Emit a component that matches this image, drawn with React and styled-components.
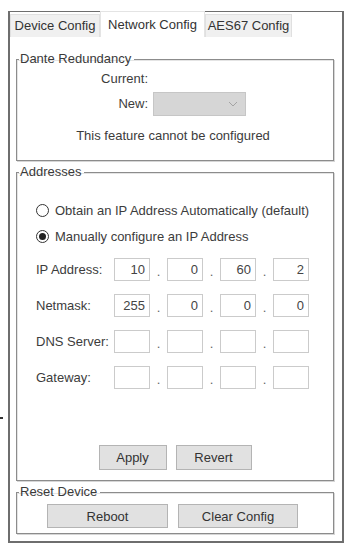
import React, { useState } from "react";
import styled, { createGlobalStyle } from "styled-components";

const GlobalStyle = createGlobalStyle`
  html, body {
    margin: 0;
    padding: 0;
    background: #fff;
  }
  body {
    font-family: "Liberation Sans", Arial, sans-serif;
    font-size: 13px;
    color: #3c3c3c;
  }
`;

const Page = styled.div`
  position: relative;
  width: 360px;
  height: 549px;
  padding: 11px 0 0 8px;
  box-sizing: border-box;
`;

// stray mark at the left edge of the screenshot
const EdgeMark = styled.span`
  position: absolute;
  left: 0;
  top: 417px;
  width: 3px;
  height: 2px;
  background: #333;
`;

const Window = styled.div`
  width: 336px;
  height: 532px;
  box-sizing: border-box;
  border: 2px solid #6e6e6e;
  border-top-width: 1px;
  display: flex;
  flex-direction: column;
  background: #fff;
`;

const TabBar = styled.div`
  display: flex;
  align-items: flex-end;
  height: 25px;
  flex-shrink: 0;
`;

const Tab = styled.button`
  font: inherit;
  color: #333;
  height: ${(p) => (p.$active ? "26px" : "23px")};
  width: ${(p) => p.$width}px;
  padding: 0;
  margin: 0;
  background: ${(p) => (p.$active ? "#fff" : "#f0f0f0")};
  border: 1px solid ${(p) => (p.$active ? "#e4e4e4" : "#e0e0e0")};
  border-bottom: none;
  cursor: pointer;
  line-height: 20px;
`;

const Panel = styled.div`
  flex: 1;
  padding: 14px 8px 0 6px;
  display: flex;
  flex-direction: column;
  gap: 3px;
`;

const Group = styled.fieldset`
  margin: 0;
  padding: ${(p) => p.$pad || "0"};
  border: 1px solid #8c8c8c;
  box-shadow: 1px 1px 0 #d6d6d6, inset 1px 1px 0 #e4e4e4;
  min-inline-size: 0;
`;

const Legend = styled.legend`
  padding: 0 3px 0 1px;
  margin-left: 2px;
  line-height: 16px;
  color: #3a3a3a;
`;

const FormRow = styled.div`
  display: grid;
  grid-template-columns: 131px auto;
  column-gap: 5px;
  align-items: center;
  min-height: ${(p) => p.$h || 16}px;
  margin-top: ${(p) => p.$mt || 0}px;
`;

const RowLabel = styled.span`
  text-align: right;
  line-height: 16px;
`;

const Dropdown = styled.div`
  width: 93px;
  height: 24px;
  box-sizing: border-box;
  background: #d6d6d6;
  border: 1px solid #c6c6c6;
  display: flex;
  align-items: center;
  justify-content: flex-end;
  padding-right: 7px;
`;

const Note = styled.div`
  text-align: center;
  line-height: 16px;
  margin-top: 12px;
  padding-right: 4px;
`;

const AddressBody = styled.div`
  padding-left: 19px;
`;

const RadioRow = styled.label`
  display: flex;
  align-items: center;
  gap: 6px;
  height: 16px;
  margin-top: ${(p) => p.$mt || 0}px;
  cursor: pointer;
`;

const RadioCircle = styled.span`
  width: 13px;
  height: 13px;
  box-sizing: border-box;
  border-radius: 50%;
  border: 1px solid #333;
  background: #fff;
  display: flex;
  align-items: center;
  justify-content: center;

  &::after {
    content: "";
    width: 7px;
    height: 7px;
    border-radius: 50%;
    background: ${(p) => (p.$checked ? "#222" : "transparent")};
  }
`;

const IpRow = styled.div`
  display: flex;
  align-items: center;
  height: 23px;
  margin-top: ${(p) => p.$mt || 0}px;
`;

const IpLabel = styled.span`
  width: 78px;
  flex-shrink: 0;
`;

const Octet = styled.div`
  width: 36px;
  height: 23px;
  box-sizing: border-box;
  border: 1px solid #cbcbcb;
  background: #fff;
  text-align: right;
  padding-right: 4px;
  line-height: 21px;
  color: #444;
`;

const Dot = styled.span`
  width: 17px;
  text-align: center;
  color: #666;
  padding-top: 4px;
`;

const ButtonRow = styled.div`
  display: flex;
  justify-content: center;
  gap: ${(p) => p.$gap || 9}px;
  margin-top: ${(p) => p.$mt || 0}px;
  padding-right: ${(p) => p.$pr || 0}px;
`;

const Button = styled.button`
  font: inherit;
  color: #333;
  width: ${(p) => p.$width}px;
  height: ${(p) => p.$height || 25}px;
  padding: 0;
  background: #e1e1e1;
  border: 1px solid #b4b4b4;
  cursor: pointer;

  &:hover {
    background: #e5f1fb;
    border-color: #0078d7;
  }
`;

const Chevron = () => (
  <svg width="10" height="6" viewBox="0 0 10 6">
    <polyline points="1,1 5,5 9,1" fill="none" stroke="#a4a4a4" strokeWidth="1" />
  </svg>
);

const ADDRESS_ROWS = [
  { label: "IP Address:", values: ["10", "0", "60", "2"] },
  { label: "Netmask:", values: ["255", "0", "0", "0"] },
  { label: "DNS Server:", values: ["", "", "", ""] },
  { label: "Gateway:", values: ["", "", "", ""] },
];

const TABS = [
  { name: "Device Config", width: 90 },
  { name: "Network Config", width: 105 },
  { name: "AES67 Config", width: 87 },
];

const App = () => {
  const [tab, setTab] = useState("Network Config");
  const [manual, setManual] = useState(true);

  return (
    <Page>
      <GlobalStyle />
      <EdgeMark />
      <Window>
        <TabBar>
          {TABS.map((t) => (
            <Tab
              key={t.name}
              $width={t.width}
              $active={tab === t.name}
              onClick={() => setTab(t.name)}
            >
              {t.name}
            </Tab>
          ))}
        </TabBar>

        <Panel>
          <Group $pad="4px 0 16px 0">
            <Legend>Dante Redundancy</Legend>
            <FormRow>
              <RowLabel>Current:</RowLabel>
              <span />
            </FormRow>
            <FormRow $h={24} $mt={5}>
              <RowLabel>New:</RowLabel>
              <Dropdown>
                <Chevron />
              </Dropdown>
            </FormRow>
            <Note>This feature cannot be configured</Note>
          </Group>

          <Group $pad="22px 0 10px 0">
            <Legend>Addresses</Legend>
            <AddressBody>
              <RadioRow onClick={() => setManual(false)}>
                <RadioCircle $checked={!manual} />
                Obtain an IP Address Automatically (default)
              </RadioRow>
              <RadioRow $mt={10} onClick={() => setManual(true)}>
                <RadioCircle $checked={manual} />
                Manually configure an IP Address
              </RadioRow>

              {ADDRESS_ROWS.map((row, i) => (
                <IpRow key={row.label} $mt={i === 0 ? 14 : 13}>
                  <IpLabel>{row.label}</IpLabel>
                  {row.values.map((v, j) => (
                    <React.Fragment key={j}>
                      {j > 0 && <Dot>.</Dot>}
                      <Octet>{v}</Octet>
                    </React.Fragment>
                  ))}
                </IpRow>
              ))}
            </AddressBody>

            <ButtonRow $mt={56}>
              <Button $width={68}>Apply</Button>
              <Button $width={76}>Revert</Button>
            </ButtonRow>
          </Group>

          <Group $pad="4px 0 5px 0">
            <Legend>Reset Device</Legend>
            <ButtonRow $gap={10} $pr={5}>
              <Button $width={121} $height={24}>
                Reboot
              </Button>
              <Button $width={120} $height={24}>
                Clear Config
              </Button>
            </ButtonRow>
          </Group>
        </Panel>
      </Window>
    </Page>
  );
};

export default App;
